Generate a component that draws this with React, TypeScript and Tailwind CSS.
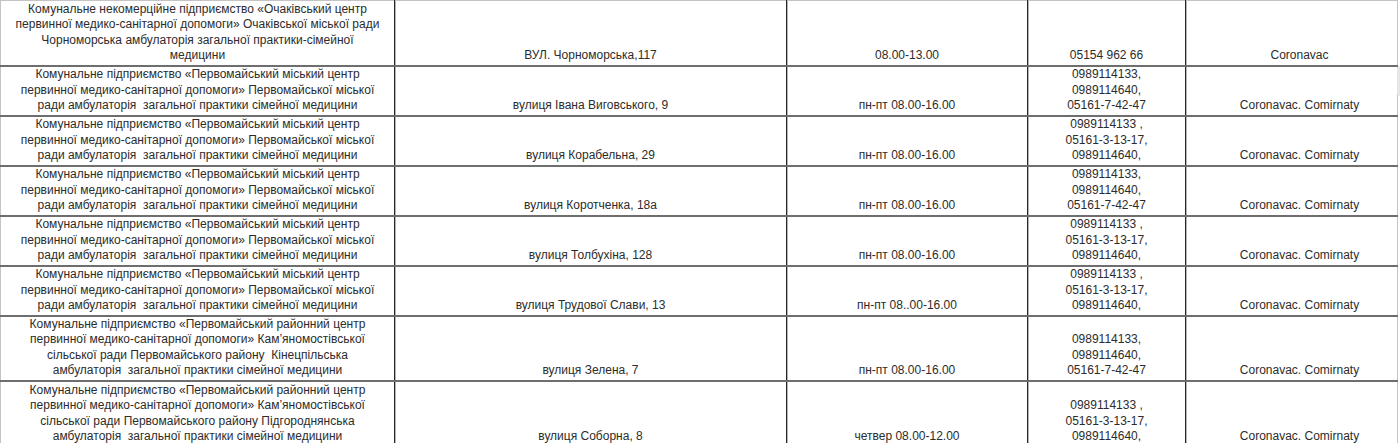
const ORG_CITY = [
  "Комунальне підприємство «Первомайський міський центр",
  "первинної медико-санітарної допомоги» Первомайської міської",
  "ради амбулаторія  загальної практики сімейної медицини",
];

const PHONES_A = ["0989114133,", "0989114640,", "05161-7-42-47"];
const PHONES_B = ["0989114133 ,", "05161-3-13-17,", "0989114640,"];

const VACCINES = "Coronavac. Comirnaty";

type Row = {
  org: string[];
  address: string;
  hours: string;
  phones: string[];
  vaccine: string;
  height: string;
};

const rows: Row[] = [
  {
    org: [
      "Комунальне некомерційне підприємство «Очаківський центр",
      "первинної медико-санітарної допомоги» Очаківської міської ради",
      "Чорноморська амбулаторія загальної практики-сімейної",
      "медицини",
    ],
    address: "ВУЛ. Чорноморська,117",
    hours: "08.00-13.00",
    phones: ["05154 962 66"],
    vaccine: "Coronavac",
    height: "h-[65px]",
  },
  { org: ORG_CITY, address: "вулиця Івана Виговського, 9", hours: "пн-пт 08.00-16.00", phones: PHONES_A, vaccine: VACCINES, height: "h-[50px]" },
  { org: ORG_CITY, address: "вулиця Корабельна, 29", hours: "пн-пт 08.00-16.00", phones: PHONES_B, vaccine: VACCINES, height: "h-[50px]" },
  { org: ORG_CITY, address: "вулиця Коротченка, 18а", hours: "пн-пт 08.00-16.00", phones: PHONES_A, vaccine: VACCINES, height: "h-[50px]" },
  { org: ORG_CITY, address: "вулиця Толбухіна, 128", hours: "пн-пт 08.00-16.00", phones: PHONES_B, vaccine: VACCINES, height: "h-[50px]" },
  { org: ORG_CITY, address: "вулиця Трудової Слави, 13", hours: "пн-пт 08..00-16.00", phones: PHONES_B, vaccine: VACCINES, height: "h-[50px]" },
  {
    org: [
      "Комунальне підприємство «Первомайський районний центр",
      "первинної медико-санітарної допомоги» Кам’яномостівської",
      "сільської ради Первомайського району  Кінецпільська",
      "амбулаторія  загальної практики сімейної медицини",
    ],
    address: "вулиця Зелена, 7",
    hours: "пн-пт 08.00-16.00",
    phones: PHONES_A,
    vaccine: VACCINES,
    height: "h-[62px]",
  },
  {
    org: [
      "Комунальне підприємство «Первомайський районний центр",
      "первинної медико-санітарної допомоги» Кам’яномостівської",
      "сільської ради Первомайського району Підгороднянська",
      "амбулаторія  загальної практики сімейної медицини",
    ],
    address: "вулиця Соборна, 8",
    hours: "четвер 08.00-12.00",
    phones: PHONES_B,
    vaccine: VACCINES,
    height: "h-[66px]",
  },
];

function Lines({ lines }: { lines: string[] }) {
  return (
    <>
      {lines.map((l, i) => (
        <div key={i} className="whitespace-pre">
          {l}
        </div>
      ))}
    </>
  );
}

export default function App() {
  const cell = "align-bottom text-center pb-[1px] p-0";
  const vline = "border-l border-l-[#262626] shadow-[inset_1px_0_0_#b5b5b5]";

  return (
    <div
      className="h-[443px] w-[1400px] overflow-hidden bg-white text-[12px] leading-[15.5px] text-[#2c2c2c] relative"
      style={{ fontFamily: '"Liberation Sans", Arial, sans-serif' }}
    >
      <table className="table-fixed border-collapse w-[1397px] border-t border-t-[#c4c4c4]">
        <colgroup>
          <col className="w-[394px]" />
          <col className="w-[392px]" />
          <col className="w-[241px]" />
          <col className="w-[158px]" />
          <col className="w-[212px]" />
        </colgroup>
        <tbody>
          {rows.map((r, i) => (
            <tr key={i} className={`${r.height} border-b-2 border-b-[#6e6e6e]`}>
              <td className={`${cell} border-l border-l-[#c4c4c4]`}>
                <Lines lines={r.org} />
              </td>
              <td className={`${cell} ${vline}`}>{r.address}</td>
              <td className={`${cell} ${vline}`}>{r.hours}</td>
              <td className={`${cell} ${vline}`}>
                <Lines lines={r.phones} />
              </td>
              <td className={`${cell} ${vline} pl-4 border-r border-r-[#c4c4c4]`}>{r.vaccine}</td>
            </tr>
          ))}
        </tbody>
      </table>
      <div className="absolute right-0 top-[66px] h-[30px] w-[3px] rounded-l bg-[#e6e6e6]" />
    </div>
  );
}
